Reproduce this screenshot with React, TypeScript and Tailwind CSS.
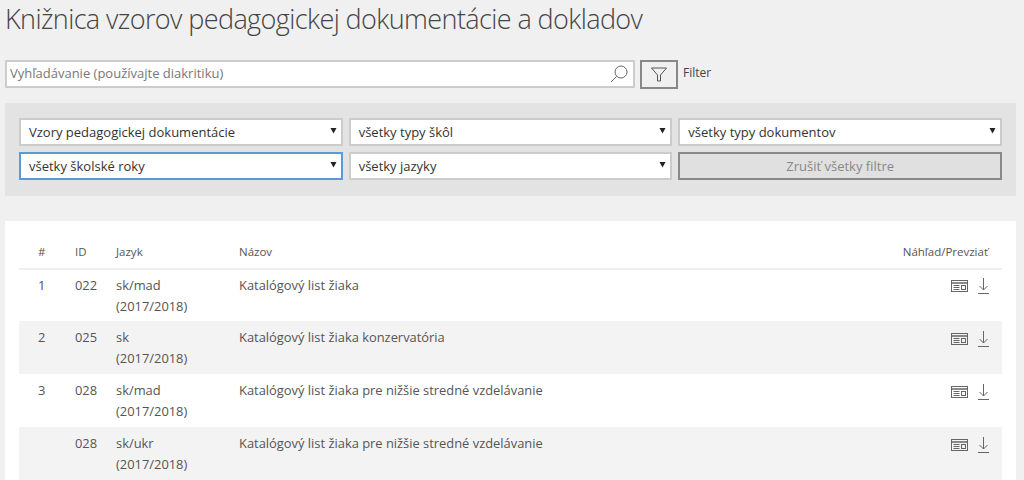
const font = "font-['Open_Sans',sans-serif]";

const rows = [
  { n: "1", id: "022", lang: "sk/mad", name: "Katalógový list žiaka" },
  { n: "2", id: "025", lang: "sk", name: "Katalógový list žiaka konzervatória" },
  { n: "3", id: "028", lang: "sk/mad", name: "Katalógový list žiaka pre nižšie stredné vzdelávanie" },
  { n: "", id: "028", lang: "sk/ukr", name: "Katalógový list žiaka pre nižšie stredné vzdelávanie" },
];

const cols = "grid grid-cols-[56px_41px_123px_1fr_auto]";

const Select = ({ label, focused }: { label: string; focused?: boolean }) => (
  <div
    className={`h-[28px] flex items-center justify-between bg-white border-2 pl-[8px] pr-[4px] pt-[2px] text-[13px] text-[#333] ${
      focused ? "border-[#5b9bd5]" : "border-[#ccc]"
    }`}
  >
    <span>{label}</span>
    <svg width="7" height="7" viewBox="0 0 7 7" className="mb-[5px]">
      <path d="M0.5 1h6L3.5 6.5z" fill="#222" />
    </svg>
  </div>
);

const App = () => {
  return (
    <div className={`${font} w-[1024px] h-[480px] overflow-hidden bg-[#f0f0f0] pl-[5px] pr-[8px] text-[#444]`}>
      <h1 className="text-[27px] font-light leading-[36px] pt-[1px] h-[60px] text-[#444] tracking-[-0.6px]">
        Knižnica vzorov pedagogickej dokumentácie a dokladov
      </h1>

      <div className="flex items-center h-[28px]">
        <div className="w-[630px] h-[28px] bg-white border-2 border-[#ccc] flex items-center pl-[3px] pr-[5px]">
          <input
            placeholder="Vyhľadávanie (používajte diakritiku)"
            className="flex-1 outline-none text-[13px] placeholder:text-[#777]"
          />
          <svg width="18" height="18" viewBox="0 0 18 18" fill="none" stroke="#666" strokeWidth="1">
            <circle cx="11" cy="7" r="6" />
            <path d="M6.5 11.5 1 17" />
          </svg>
        </div>
        <button className="ml-[5px] w-[38px] h-[29px] border-2 border-[#888] flex items-center justify-center">
          <svg width="18" height="15" viewBox="0 0 18 15" fill="none" stroke="#555" strokeWidth="1">
            <path d="M1.5 1h15L10.5 8v6h-3V8z" />
          </svg>
        </button>
        <span className="ml-[5px] mb-[2px] text-[12px] text-[#444]">Filter</span>
      </div>

      <div className="mt-[15px] h-[93px] bg-[#e3e3e3] px-[14px] pt-[15px] grid grid-cols-3 gap-x-[6px] gap-y-[6px] content-start">
        <Select label="Vzory pedagogickej dokumentácie" />
        <Select label="všetky typy škôl" />
        <Select label="všetky typy dokumentov" />
        <Select label="všetky školské roky" focused />
        <Select label="všetky jazyky" />
        <button className="h-[28px] bg-[#e0e0e0] border-2 border-[#888] pt-[2px] text-[13px] text-[#888]">
          Zrušiť všetky filtre
        </button>
      </div>

      <div className="mt-[25px] bg-white px-[14px] h-[300px]">
        <div className={`${cols} h-[49px] items-end pb-[8px] text-[11.5px] text-[#555] border-b-2 border-[#f0f0f0]`}>
          <span className="pl-[19px]">#</span>
          <span>ID</span>
          <span>Jazyk</span>
          <span>Názov</span>
          <span className="pr-[14px]">Náhľad/Prevziať</span>
        </div>
        {rows.map((r, i) => (
          <div
            key={i}
            className={`${cols} text-[12.9px] leading-[21px] text-[#555] ${i === 0 ? "h-[51px] pt-[5px]" : "h-[53px] pt-[6px]"} ${
              i % 2 ? "bg-[#f3f3f3]" : "bg-white"
            }`}
          >
            <span className="pl-[19px]">{r.n}</span>
            <span>{r.id}</span>
            <span>
              {r.lang}
              <br />
              (2017/2018)
            </span>
            <span>{r.name}</span>
            <div className={`flex items-start gap-[10px] pr-[13px] ${i === 0 ? "pt-[3px]" : "pt-[4px]"}`}>
              <svg width="17" height="14" viewBox="0 0 17 14" fill="none" stroke="#666" strokeWidth="1" className="mt-[1px]">
                <rect x="0.5" y="1.5" width="16" height="11" />
                <path d="M0.5 4h16" strokeWidth="1.5" />
                <path d="M2.5 6.5h6M2.5 8.5h6M2.5 10.5h6" />
                <rect x="10.5" y="6.5" width="4" height="4" />
              </svg>
              <svg width="11" height="16" viewBox="0 0 11 16" fill="none" stroke="#666" strokeWidth="1">
                <path d="M5.5 0v12M1.5 8l4 4 4-4M0 15.5h11" />
              </svg>
            </div>
          </div>
        ))}
      </div>
    </div>
  );
};

export default App;
